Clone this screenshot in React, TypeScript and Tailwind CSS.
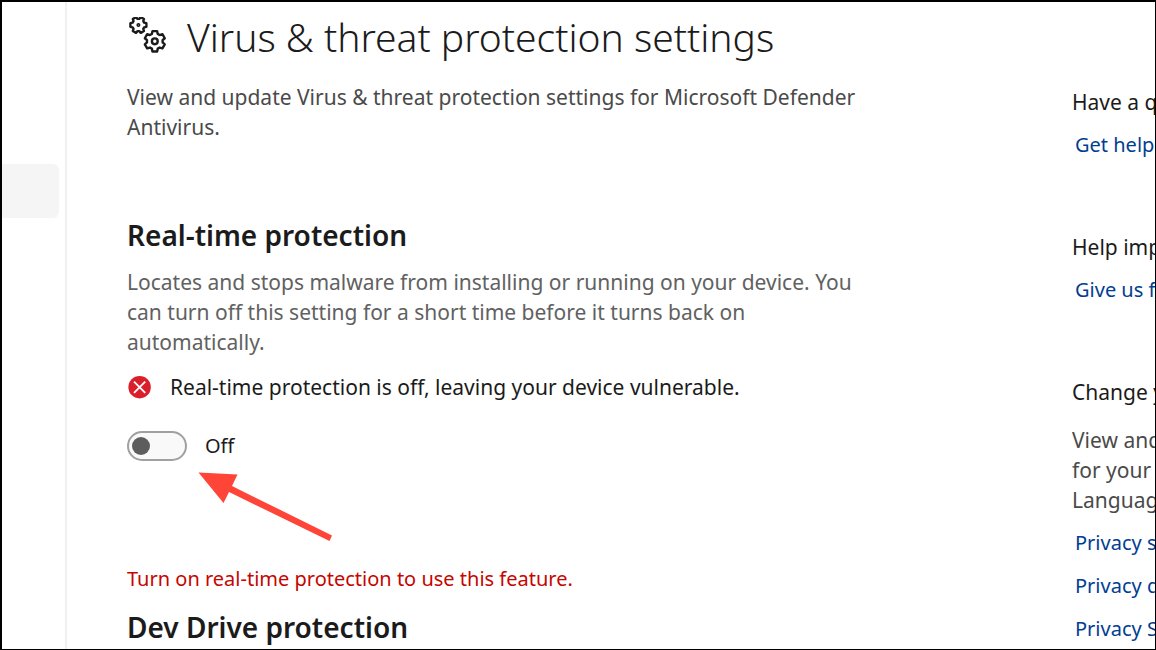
import { useState } from "react";

type GearProps = {
  cx: number;
  cy: number;
  outer: number;
  inner: number;
  hub: number;
  offset: number;
};

/** Outline of a six-toothed gear; offset is the angle of the first tooth. */
function gearPath({ cx, cy, outer, inner, offset }: GearProps) {
  const points: string[] = [];
  for (let i = 0; i < 6; i++) {
    const mid = offset + i * 60;
    const corners = [
      [inner, -22],
      [outer, -13],
      [outer, 13],
      [inner, 22],
    ];
    for (const [r, a] of corners) {
      const rad = ((mid + a) * Math.PI) / 180;
      points.push(`${(cx + r * Math.cos(rad)).toFixed(2)} ${(cy + r * Math.sin(rad)).toFixed(2)}`);
    }
  }
  return `M${points.join("L")}Z`;
}

function Gear(props: GearProps) {
  return (
    <>
      <path d={gearPath(props)} />
      <circle cx={props.cx} cy={props.cy} r={props.hub} />
    </>
  );
}

function GearsIcon() {
  return (
    <svg
      aria-hidden="true"
      viewBox="0 0 40 40"
      className="h-10 w-10 shrink-0"
      fill="none"
      stroke="#1b1b1b"
      strokeWidth="2.4"
      strokeLinejoin="round"
    >
      <Gear cx={11.4} cy={8} outer={8.2} inner={6.2} hub={0.8} offset={0} />
      <Gear cx={27.8} cy={24.3} outer={10.4} inner={7.9} hub={2.9} offset={30} />
    </svg>
  );
}

function ErrorIcon() {
  return (
    <svg aria-hidden="true" viewBox="0 0 24 24" className="h-6 w-6 shrink-0">
      <circle cx="12.6" cy="12.2" r="11.2" fill="#da1f2b" />
      <path d="M7 6.6l11.2 11.2M18.2 6.6l-11.2 11.2" stroke="#fff" strokeWidth="1.8" />
    </svg>
  );
}

function Arrow() {
  return (
    <svg
      aria-hidden="true"
      viewBox="0 0 136 72"
      className="pointer-events-none absolute top-10 left-[71px] h-[72px] w-[136px]"
      fill="#ff4438"
    >
      <path d="M0.5 1.5L39.5 3.5L34 15L134 64.5L131.5 70L31 21L25.5 32Z" />
    </svg>
  );
}

function ProtectionSwitch() {
  const [on, setOn] = useState(false);
  return (
    <div className="relative mt-[29px] flex items-center gap-[18px] text-[20px]">
      <button
        type="button"
        role="switch"
        aria-checked={on}
        aria-labelledby="switch-label"
        onClick={() => setOn(!on)}
        className={`flex h-[30px] w-[60px] items-center rounded-full border-2 border-[#a0a0a0] bg-[#f9f9f9] px-[3px] ${
          on ? "justify-end" : "justify-start"
        }`}
      >
        <span className="h-[18px] w-[18px] rounded-full bg-[#5d5d5d]" />
      </button>
      <span id="switch-label">{on ? "On" : "Off"}</span>
      <Arrow />
    </div>
  );
}

function SideLink({ children }: { children: string }) {
  return (
    <a href="#" className="ml-[3px] block text-[20px] text-[#003e92]">
      {children}
    </a>
  );
}

export default function App() {
  return (
    <div className="flex min-h-screen overflow-hidden border-t-2 border-r border-b border-l-2 border-black bg-white font-['Noto_Sans','Open_Sans',sans-serif] text-[21px] leading-[30px] text-[#1b1b1b]">
      <nav aria-label="Sections" className="w-[65px] shrink-0 border-r-2 border-[#f0f0f0] pt-[162px] pr-1.5">
        <a href="#" aria-label="Virus & threat protection" className="block h-[54px] rounded-r-md bg-[#f5f5f5]" />
      </nav>

      <main className="min-w-0 flex-1 pl-[60px]">
        <header className="flex items-center gap-5 pt-[7px]">
          <GearsIcon />
          <h1 className="text-[39px] leading-[56px] font-light whitespace-nowrap">
            Virus &amp; threat protection settings
          </h1>
        </header>
        <p className="mt-[17px] max-w-[760px] text-[#4a4a4a]">
          View and update Virus &amp; threat protection settings for Microsoft Defender Antivirus.
        </p>

        <section className="mt-[73px]">
          <h2 className="text-[28px] leading-10 font-semibold">Real-time protection</h2>
          <p className="mt-3 max-w-[760px] text-[#616161]">
            Locates and stops malware from installing or running on your device. You can turn off this setting for a
            short time before it turns back on automatically.
          </p>
          <p className="mt-[15px] flex items-center gap-[19px]">
            <ErrorIcon />
            Real-time protection is off, leaving your device vulnerable.
          </p>
          <ProtectionSwitch />
        </section>

        <section className="mt-[103px]">
          <p className="text-[20px] text-[#c50500]">Turn on real-time protection to use this feature.</p>
          <h2 className="mt-[13px] text-[28px] leading-10 font-semibold">Dev Drive protection</h2>
        </section>
      </main>

      <aside className="w-[83px] shrink-0 overflow-hidden pt-[85px] whitespace-nowrap">
        <h3>Have a question?</h3>
        <div className="mt-[13px]">
          <SideLink>Get help</SideLink>
        </div>
        <h3 className="mt-[72px]">Help improve</h3>
        <div className="mt-[13px]">
          <SideLink>Give us feedback</SideLink>
        </div>
        <h3 className="mt-[72px]">Change your</h3>
        <p className="mt-[18px] text-[#4a4a4a]">
          View and
          <br />
          for your
          <br />
          Language
        </p>
        <div className="mt-[13px] flex flex-col gap-[13px]">
          <SideLink>Privacy settings</SideLink>
          <SideLink>Privacy dashboard</SideLink>
          <SideLink>Privacy Statement</SideLink>
        </div>
      </aside>
    </div>
  );
}
